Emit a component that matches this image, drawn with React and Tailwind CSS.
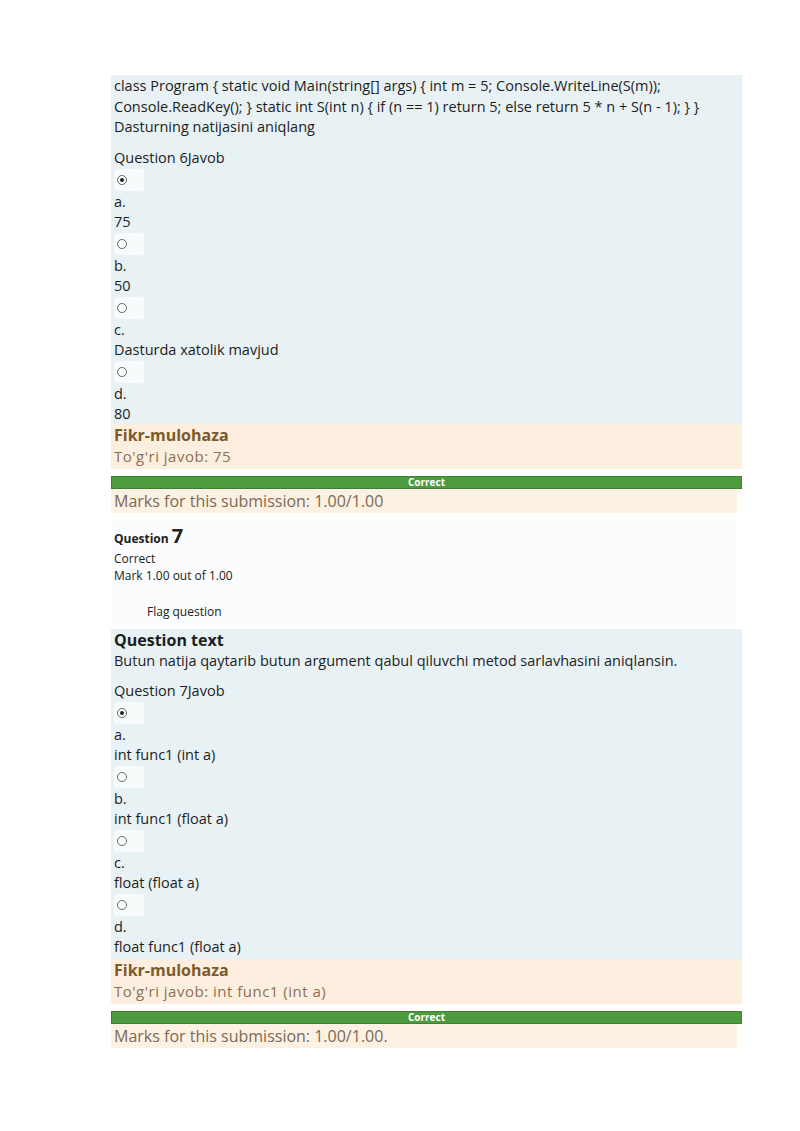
import React from "react";

const font = { fontFamily: '"Open Sans", "Noto Sans", sans-serif' };

const codeText =
  "class Program { static void Main(string[] args) { int m = 5; Console.WriteLine(S(m)); Console.ReadKey(); } static int S(int n) { if (n == 1) return 5; else return 5 * n + S(n - 1); } }";

function Radio({ checked }) {
  return (
    <div className="h-6 flex items-center">
      <div className="w-[30px] h-[22px] bg-white/70 rounded-sm flex items-center pl-[3px]">
        <span className="w-[10px] h-[10px] rounded-full border border-[#666] bg-white flex items-center justify-center">
          {checked && <span className="w-[4px] h-[4px] rounded-full bg-[#222]" />}
        </span>
      </div>
    </div>
  );
}

function Options({ items }) {
  return (
    <div>
      {items.map((o, i) => (
        <div key={o.letter}>
          <Radio checked={i === 0} />
          <div className="leading-5">{o.letter + "."}</div>
          <div className="leading-5">{o.text}</div>
        </div>
      ))}
    </div>
  );
}

function Feedback({ answer, marks }) {
  return (
    <>
      <div className="bg-[#fcefdf] px-[3px] pt-[1px] pb-[2px]">
        <div className="text-[16px] font-bold text-[#7d5a29] leading-[21px]">Fikr-mulohaza</div>
        <div className="text-[15px] tracking-[0.5px] text-[#8c7150] leading-[21px]">{"To'g'ri javob: " + answer}</div>
      </div>
      <div className="h-[7px] bg-white/60" />
      <div className="h-[13px] bg-[#4e9a3f] border border-[#3f8030] text-white text-[10px] font-bold flex items-center justify-center leading-none w-[631px]">
        Correct
      </div>
      <div className="bg-[#fdf1e3] px-[3px] text-[16px] text-[#7a6a55] leading-[24px] w-[626px]">{marks}</div>
    </>
  );
}

export default function App() {
  return (
    <div className="min-h-[1131px] bg-white pt-[75px] text-[14.5px] text-[#1d1d1d]" style={font}>
      <div className="ml-[111px] w-[631px]">
        <div className="bg-[#e8f2f5] px-[3px] pt-[1px] pb-0">
          <div className="leading-[20.5px]">{codeText}</div>
          <div className="leading-[20.5px]">Dasturning natijasini aniqlang</div>
          <div className="mt-[10px] leading-5">Question 6Javob</div>
          <Options
            items={[
              { letter: "a", text: "75" },
              { letter: "b", text: "50" },
              { letter: "c", text: "Dasturda xatolik mavjud" },
              { letter: "d", text: "80" },
            ]}
          />
        </div>
        <Feedback answer="75" marks="Marks for this submission: 1.00/1.00" />

        <div className="bg-[#fafcfd] mt-[7px] px-[3px] pt-[6px] pb-[6px] text-[12px] text-[#222] w-[626px]">
          <div className="font-bold leading-[22px] flex items-baseline gap-[3px]">
            <span className="text-[12px]">Question</span>
            <span className="text-[20px] leading-none">7</span>
          </div>
          <div className="leading-[17px]">Correct</div>
          <div className="leading-[17px]">Mark 1.00 out of 1.00</div>
          <div className="mt-[19px] pl-[33px] leading-[17px]">Flag question</div>
        </div>

        <div className="bg-[#e8f2f5] mt-[3px] px-[3px] pt-0 pb-[2px]">
          <div className="text-[16px] font-bold leading-[22px]">Question text</div>
          <div className="leading-[20px]">Butun natija qaytarib butun argument qabul qiluvchi metod sarlavhasini aniqlansin.</div>
          <div className="mt-[10px] leading-5">Question 7Javob</div>
          <Options
            items={[
              { letter: "a", text: "int func1 (int a)" },
              { letter: "b", text: "int func1 (float a)" },
              { letter: "c", text: "float (float a)" },
              { letter: "d", text: "float func1 (float a)" },
            ]}
          />
        </div>
        <Feedback answer="int func1 (int a)" marks="Marks for this submission: 1.00/1.00." />
      </div>
    </div>
  );
}
